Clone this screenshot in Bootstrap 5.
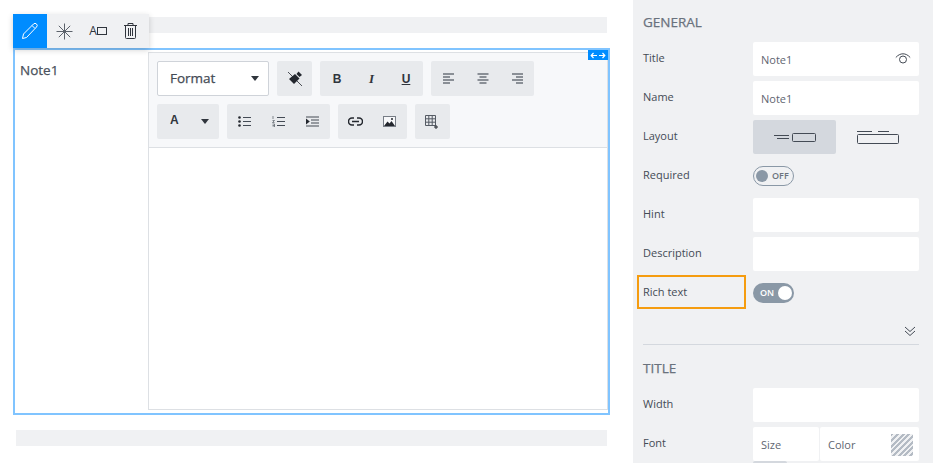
<!DOCTYPE html>
<html lang="en">
<head>
  <meta charset="UTF-8" />
  <meta name="viewport" content="width=device-width, initial-scale=1.0"/>
  <title>Form designer</title>
  <link href="https://cdn.jsdelivr.net/npm/bootstrap@5.3.3/dist/css/bootstrap.min.css" rel="stylesheet">
  <style>
    html, body { height: 463px; overflow: hidden; }
    body { font-family: "Open Sans", "Noto Sans", sans-serif; color: #444b55; font-size: 11px; background: #fff; }
    svg { display: block; }
    .medium { -webkit-text-stroke: .25px currentColor; }
    .canvas { width: 633px; padding: 17px 26px 0 16px; position: relative; flex: none; }
    .bar { height: 16px; background: #f0f1f3; }
    .field { margin: 15px -3px 15px -3px; height: 367px; border: 2px solid #80c4ff; position: relative; }
    .field-label { width: 133px; padding: 10px 5px; font-size: 13.5px; color: #4a515c; flex: none; }
    .editor { flex: 1; margin: 2px 0 3px; border: 1px solid #dde0e4; }
    .editor-tools { background: #f7f8fa; border-bottom: 1px solid #dde0e4; padding: 8px; height: 95px; }
    .tb-group { background: #e8eaed; border-radius: 2px; height: 35px; }
    .tb-btn { width: 34.4px; height: 35px; }
    .tb-single { width: 35px; }
    .tb-txt { font-family: "Liberation Sans", sans-serif; font-size: 12px; font-weight: 700; color: #30353d; }
    .tb-serif { font-family: "Liberation Serif", serif; font-size: 13px; }
    .tb-color { width: 62px; padding: 0 10px 0 13px; }
    .tb-color .tb-txt { margin-top: -4px; }
    .format { width: 112px; height: 35px; background: #fff; border: 1px solid #cfd3d9; border-radius: 2px; padding: 0 9px 0 12px; font-size: 13.5px; color: #444b55; }
    .caret { width: 0; height: 0; border-left: 4px solid transparent; border-right: 4px solid transparent; border-top: 5px solid #30353d; }
    .float-bar { position: absolute; left: 13px; top: 14px; height: 34px; background: #f0f1f3; box-shadow: 0 2px 6px rgba(0,0,0,.18); z-index: 2; }
    .float-bar > div { width: 34px; height: 34px; }
    .float-bar > .on { background: #008cff; }
    .float-label { font-size: 12px; color: #30353d; }
    .resize { position: absolute; right: 0; top: 0; width: 20px; height: 10px; background: #008cff; }
    .panel { width: 300px; height: 463px; background: #f0f1f3; padding: 0 14px 0 10px; overflow: hidden; flex: none; }
    .panel h6 { font-size: 13.5px; font-weight: 400; color: #6a727d; margin: 0; line-height: 20px; }
    .head-general { padding-top: 12px; height: 42px; }
    .head-title { padding-top: 13px; height: 43px; }
    .row-p { display: flex; align-items: center; height: 34px; margin-bottom: 5px; font-size: 11px; color: #444b55; }
    .row-p > label { width: 110px; flex: none; margin-top: -1px; }
    .box { width: 166px; height: 34px; background: #fff; border-radius: 2px; padding: 2px 8px 0; color: #5f6671; font-size: 11px; flex: none; }
    .box-size { width: 66px; }
    .box-color { width: 99px; padding-right: 6px; }
    .font-boxes { gap: 1px; }
    .eye { margin-top: -3px; }
    .opt { width: 83px; height: 34px; border-radius: 2px; }
    .opt.active { background: #d4d8de; }
    .toggle { width: 41px; height: 20px; border-radius: 10px; font-size: 9px; font-weight: 600; padding: 0 2px; margin-top: -1px; }
    .toggle i { display: block; width: 12px; height: 12px; border-radius: 50%; }
    .toggle.off { border: 1px solid #8a98a6; color: #6a727d; }
    .toggle.off i { background: #8a98a6; }
    .toggle.on { background: #8a98a6; color: #fff; padding-left: 7px; }
    .toggle.on i { background: #fff; width: 14px; height: 14px; }
    .more { padding: 11px 3px 0 0; height: 29px; }
    .rich-mark { position: absolute; left: 637px; top: 275px; width: 109px; height: 34px; border: 2px solid #f59c0f; pointer-events: none; }
    .sep { border-top: 1px solid #d4d8de; }
    .hatch { width: 22px; height: 22px; background: repeating-linear-gradient(135deg, #b4bbc4 0 2px, #f0f1f3 2px 4px); }
    .sliver { width: 34px; height: 6px; background: #d4d8de; margin-left: 110px; border-radius: 2px 2px 0 0; }
  </style>
</head>
<body>
<div class="d-flex">

  <!-- Canvas -->
  <div class="canvas">
    <div class="bar"></div>
    <div class="field d-flex">
      <div class="field-label medium">Note1</div>
      <div class="editor">
        <div class="editor-tools d-flex flex-column gap-2">
          <div class="d-flex gap-2">
            <div class="format d-flex align-items-center justify-content-between"><span class="medium">Format</span><span class="caret"></span></div>
            <div class="tb-group d-flex">
              <div class="tb-btn tb-single d-flex align-items-center justify-content-center">
                <svg width="16" height="16" viewBox="0 0 16 16"><path d="M2 8 8 3l4.500 4.500L7 13z" fill="#23272e"/><path d="M9.500 3l2-2.500 3.500 3.500-2.500 2z" fill="#23272e"/><path d="M1 1l14 14" stroke="#23272e" stroke-width=".8" fill="none"/></svg>
              </div>
            </div>
            <div class="tb-group d-flex">
              <div class="tb-btn d-flex align-items-center justify-content-center"><span class="tb-txt">B</span></div>
              <div class="tb-btn d-flex align-items-center justify-content-center"><span class="tb-txt tb-serif fst-italic">I</span></div>
              <div class="tb-btn d-flex align-items-center justify-content-center"><span class="tb-txt text-decoration-underline">U</span></div>
            </div>
            <div class="tb-group d-flex">
              <div class="tb-btn d-flex align-items-center justify-content-center">
                <svg width="12" height="11" viewBox="0 0 12 11"><path d="M1 1h11M1 4h7M1 7h11M1 10h7" stroke="#6b717a" stroke-width="1.400" fill="none"/></svg>
              </div>
              <div class="tb-btn d-flex align-items-center justify-content-center">
                <svg width="12" height="11" viewBox="0 0 12 11"><path d="M.5 1h11M2.500 4h7M.5 7h11M2.500 10h7" stroke="#6b717a" stroke-width="1.400" fill="none"/></svg>
              </div>
              <div class="tb-btn d-flex align-items-center justify-content-center">
                <svg width="12" height="11" viewBox="0 0 12 11"><path d="M1 1h11M5 4h7M1 7h11M5 10h7" stroke="#6b717a" stroke-width="1.400" fill="none"/></svg>
              </div>
            </div>
          </div>
          <div class="d-flex gap-2">
            <div class="tb-group tb-color d-flex align-items-center justify-content-between">
              <span class="tb-txt">A</span><span class="caret"></span>
            </div>
            <div class="tb-group d-flex">
              <div class="tb-btn d-flex align-items-center justify-content-center">
                <svg width="13" height="11" viewBox="0 0 13 11"><circle cx="1.500" cy="1.500" r="1.300" fill="#23272e"/><circle cx="1.500" cy="5.500" r="1.300" fill="#23272e"/><circle cx="1.500" cy="9.500" r="1.300" fill="#23272e"/><path d="M5 1.500h8M5 5.500h8M5 9.500h8" stroke="#444b55" fill="none"/></svg>
              </div>
              <div class="tb-btn d-flex align-items-center justify-content-center">
                <svg width="13" height="11" viewBox="0 0 13 11"><path d="M1 0v3M.5 4.500h2l-2 2h2M.5 8h2v3h-2M.5 9.500h2" stroke="#555b64" stroke-width=".7" fill="none"/><path d="M5 1.500h8M5 5.500h8M5 9.500h8" stroke="#444b55" fill="none"/></svg>
              </div>
              <div class="tb-btn d-flex align-items-center justify-content-center">
                <svg width="13" height="11" viewBox="0 0 13 11"><path d="M0 1h13M5 4h8M5 7h8M0 10h13" stroke="#444b55" stroke-width="1.200" fill="none"/><path d="M0 2.500v6l3.800-3z" fill="#23272e"/></svg>
              </div>
            </div>
            <div class="tb-group d-flex">
              <div class="tb-btn d-flex align-items-center justify-content-center">
                <svg width="15" height="9" viewBox="0 0 15 9"><path d="M6 1H4a3.500 3.500 0 0 0 0 7h2M9 1h2a3.500 3.500 0 0 1 0 7H9M4 4.500h7" stroke="#23272e" stroke-width="1.500" fill="none"/></svg>
              </div>
              <div class="tb-btn d-flex align-items-center justify-content-center">
                <svg width="13" height="11" viewBox="0 0 13 11"><rect x=".5" y=".5" width="12" height="10" fill="#f7f8fa" stroke="#777d86"/><path d="M1 10l3.500-4.500 2 2L8.500 5 12 10z" fill="#23272e"/><circle cx="9" cy="3" r="1" fill="#23272e"/></svg>
              </div>
            </div>
            <div class="tb-group d-flex">
              <div class="tb-btn tb-single d-flex align-items-center justify-content-center">
                <svg width="14" height="14" viewBox="0 0 14 14"><path d="M.5 .5h10v10H.5zM.5 3.800h10M.5 7.200h10M3.800 .5v10M7.200 .5v10" stroke="#555b64" fill="none"/><path d="M11 10v4M9 12h4" stroke="#23272e" fill="none"/></svg>
              </div>
            </div>
          </div>
        </div>
      </div>
      <div class="resize d-flex align-items-center justify-content-center">
        <svg width="16" height="7" viewBox="0 0 16 7"><path d="M7 3.500H1.200M3.500 1 1.200 3.500 3.500 6M9 3.500h5.800M12.500 1l2.300 2.500L12.500 6" stroke="#fff" stroke-width="1.200" fill="none"/></svg>
      </div>
    </div>
    <div class="bar"></div>
  </div>

  <!-- Field toolbar -->
  <div class="float-bar d-flex">
    <div class="on d-flex align-items-center justify-content-center">
      <svg width="18" height="18" viewBox="0 0 18 18"><path d="M1.500 16.500l1-4.500L12.500 2a1.800 1.800 0 0 1 3 3L5.500 15.500z M11 3.500l3 3" stroke="#fff" fill="none"/></svg>
    </div>
    <div class="d-flex align-items-center justify-content-center">
      <svg width="17" height="17" viewBox="0 0 17 17"><path d="M8.500 .5v16M.5 8.500h16M2.800 2.800l11.400 11.400M14.200 2.800 2.800 14.200" stroke="#5c626b" fill="none"/></svg>
    </div>
    <div class="float-label d-flex align-items-center justify-content-center">
      A<svg width="10" height="8" viewBox="0 0 10 8"><rect x=".5" y=".5" width="9" height="7" fill="none" stroke="#30353d"/></svg>
    </div>
    <div class="d-flex align-items-center justify-content-center pe-1">
      <svg width="13" height="16" viewBox="0 0 13 16"><path d="M0 2.500h13M4 2.500V.5h5v2M1.500 2.500v12a1 1 0 0 0 1 1h8a1 1 0 0 0 1-1v-12M4.500 5v8M6.500 5v8M8.500 5v8" stroke="#30353d" fill="none"/></svg>
    </div>
  </div>

  <!-- Properties panel -->
  <div class="panel">
    <h6 class="head-general medium">GENERAL</h6>
    <div class="row-p"><label>Title</label>
      <div class="box d-flex align-items-center justify-content-between">Note1
        <svg class="eye" width="16" height="11" viewBox="0 0 16 11"><path d="M.8 4.500C3 2 5.500 .8 8 .8s5 1.200 7.200 3.700" stroke="#444b55" fill="none"/><circle cx="8" cy="6.500" r="3.500" fill="none" stroke="#444b55"/></svg>
      </div>
    </div>
    <div class="row-p"><label>Name</label><div class="box d-flex align-items-center">Note1</div></div>
    <div class="row-p"><label>Layout</label>
      <div class="d-flex">
        <div class="opt active d-flex align-items-center justify-content-center">
          <svg width="42" height="9" viewBox="0 0 42 9"><path d="M0 2.500h15M3 5.500h12" stroke="#444b55" fill="none"/><rect x="18.500" y=".5" width="23" height="8" rx="1" fill="none" stroke="#444b55"/></svg>
        </div>
        <div class="opt d-flex align-items-center justify-content-center">
          <svg width="42" height="13" viewBox="0 0 42 13"><path d="M0 .5h15M21 .5h11" stroke="#444b55" fill="none"/><rect x=".5" y="3.500" width="41" height="9" rx="1" fill="none" stroke="#444b55"/></svg>
        </div>
      </div>
    </div>
    <div class="row-p"><label>Required</label><div class="toggle off d-flex align-items-center gap-1"><i></i>OFF</div></div>
    <div class="row-p"><label>Hint</label><div class="box"></div></div>
    <div class="row-p"><label>Description</label><div class="box"></div></div>
    <div class="row-p"><label>Rich text</label><div class="toggle on d-flex align-items-center justify-content-between">ON<i></i></div></div>
    <div class="more d-flex justify-content-end">
      <svg width="12" height="11" viewBox="0 0 12 11"><path d="M1 1l5 4.500L11 1M1 5l5 4.500L11 5" stroke="#444b55" fill="none"/></svg>
    </div>
    <div class="sep"></div>
    <h6 class="head-title medium">TITLE</h6>
    <div class="row-p"><label>Width</label><div class="box"></div></div>
    <div class="row-p mb-0"><label>Font</label>
      <div class="font-boxes d-flex">
        <div class="box box-size d-flex align-items-center">Size</div>
        <div class="box box-color d-flex align-items-center justify-content-between">Color<span class="hatch"></span></div>
      </div>
    </div>
    <div class="sliver"></div>
  </div>
</div>

<div class="rich-mark"></div>

<script src="https://cdn.jsdelivr.net/npm/bootstrap@5.3.3/dist/js/bootstrap.bundle.min.js"></script>
</body>
</html>
